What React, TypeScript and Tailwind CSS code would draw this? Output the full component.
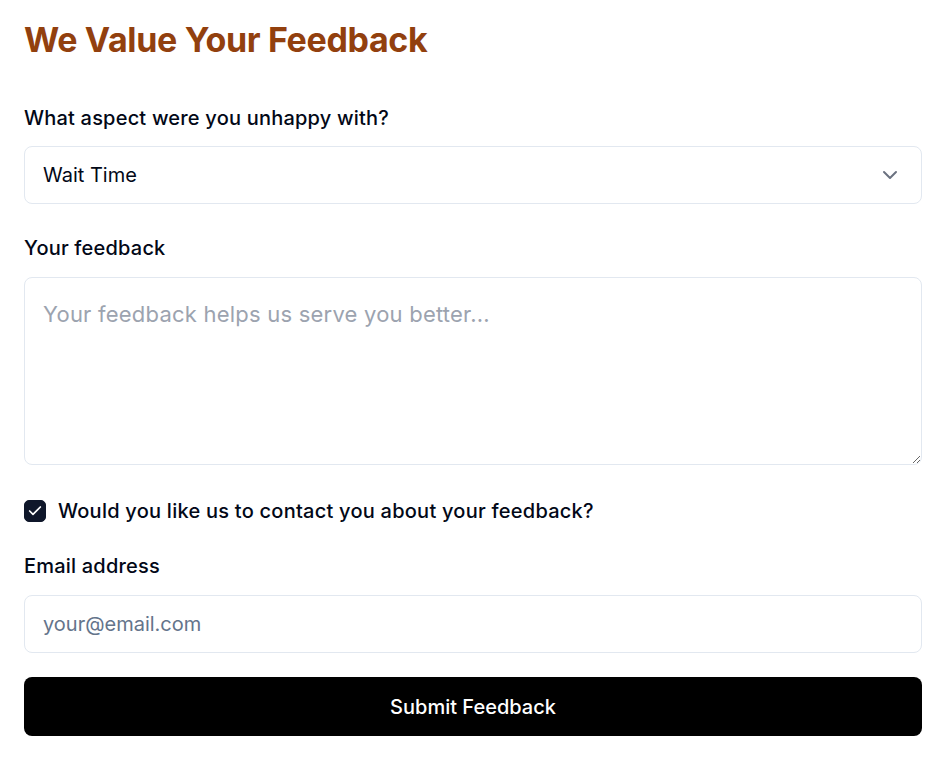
import React, { useState } from 'react';
import { Check, ChevronDown } from 'lucide-react';

const App: React.FC = () => {
  const [contact, setContact] = useState(true);

  return (
    <div className="min-h-screen bg-white px-6 pt-5 font-['Inter',sans-serif] text-[#020817]">
      <h1 className="text-[34px] font-bold leading-10 tracking-[-0.01em] text-[#92400e]">We Value Your Feedback</h1>

      <form className="mt-11 flex flex-col">
        <label className="text-[20px] font-medium leading-7 tracking-[0.01em]">What aspect were you unhappy with?</label>
        <div className="relative mt-3.5">
          <select
            defaultValue="wait"
            className="h-[58px] w-full appearance-none rounded-lg border border-[#e2e8f0] bg-white px-[18px] text-[20px] text-[#020817] outline-none"
          >
            <option value="wait">Wait Time</option>
            <option value="food">Food Quality</option>
            <option value="service">Service</option>
          </select>
          <ChevronDown className="pointer-events-none absolute right-[20px] top-1/2 h-6 w-6 -translate-y-1/2 text-[#6b7280]" strokeWidth={2} />
        </div>

        <label className="mt-[30px] text-[20px] font-medium leading-7 tracking-[0.01em]">Your feedback</label>
        <textarea
          placeholder="Your feedback helps us serve you better..."
          className="mt-[15px] h-[188px] w-full rounded-lg border border-[#e2e8f0] px-[18px] py-[22px] text-[22px] leading-[28px] tracking-[0.01em] outline-none placeholder:text-[#9ca3af]"
        />

        <div className="mt-8 flex h-7 items-center gap-3">
          <button
            type="button"
            onClick={() => setContact(!contact)}
            className="flex h-[22px] w-[22px] items-center justify-center rounded-[5px] border border-[#0f172a] bg-[#0f172a]"
          >
            {contact && <Check className="h-4 w-4 text-white" strokeWidth={2.5} />}
          </button>
          <span className="text-[20px] font-medium leading-7 tracking-[0.012em]">Would you like us to contact you about your feedback?</span>
        </div>

        <label className="mt-[27px] text-[20px] font-medium leading-7 tracking-[0.01em]">Email address</label>
        <input
          type="email"
          placeholder="your@email.com"
          className="mt-[15px] h-[58px] w-full rounded-lg border border-[#e2e8f0] px-[18px] text-[20px] outline-none placeholder:text-[#64748b]"
        />

        <button
          type="button"
          className="mt-6 h-[59px] w-full rounded-lg bg-black text-[20px] font-medium text-white"
        >
          Submit Feedback
        </button>
      </form>
    </div>
  );
};

export default App;
